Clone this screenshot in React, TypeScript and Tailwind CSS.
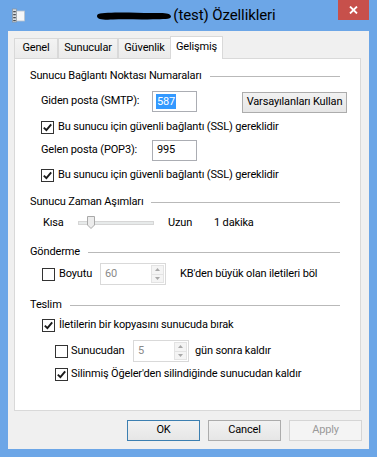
import React from "react";

const FONT = "font-['Roboto',sans-serif] text-[11px] tracking-[-0.15px] text-black";

function Check({ checked }: { checked?: boolean }) {
  return (
    <span className="w-[13px] h-[13px] border border-[#333333] bg-white flex items-center justify-center shrink-0">
      {checked && (
        <svg width="9" height="9" viewBox="0 0 9 9">
          <path d="M0.8 4.6 L3.4 7.2 L8.2 1.4" stroke="#1a1a1a" strokeWidth="1.9" fill="none" />
        </svg>
      )}
    </span>
  );
}

function Header({ text, mt }: { text: string; mt: string }) {
  return (
    <div className={`flex items-center h-[16px] pl-[15px] pr-[20px] ${mt}`}>
      <span className="whitespace-nowrap">{text}</span>
      <div className="flex-1 h-px bg-[#b9b9b9] ml-[8px]" />
    </div>
  );
}

function Spinner({ value, w }: { value: string; w: string }) {
  return (
    <div className={`flex h-[22px] ${w} border border-[#d9d9d9] bg-white`}>
      <div className="flex-1 flex items-center pl-[4px] text-[#8a8a8a]">{value}</div>
      <div className="w-[13px] flex flex-col my-[1px] mr-[1px] border border-[#e3e3e3] bg-[#f4f4f4]">
        <div className="flex-1 flex items-center justify-center border-b border-[#e3e3e3]">
          <svg width="5" height="3" viewBox="0 0 5 3"><path d="M0 3 L2.5 0 L5 3 Z" fill="#a8a8a8" /></svg>
        </div>
        <div className="flex-1 flex items-center justify-center">
          <svg width="5" height="3" viewBox="0 0 5 3"><path d="M0 0 L2.5 3 L5 0 Z" fill="#a8a8a8" /></svg>
        </div>
      </div>
    </div>
  );
}

function Btn({ children, variant }: { children: React.ReactNode; variant?: "default" | "disabled" }) {
  const cls =
    variant === "default"
      ? "border-[#3c7fb1] bg-gradient-to-b from-[#f2f2f2] to-[#e6e6e6] text-black"
      : variant === "disabled"
      ? "border-[#d5d5d5] bg-[#f4f4f4] text-[#9a9a9a]"
      : "border-[#acacac] bg-gradient-to-b from-[#f2f2f2] to-[#e6e6e6] text-black";
  return <div className={`w-[73px] h-[21px] border flex items-center justify-center ${cls}`}>{children}</div>;
}

export default function App() {
  return (
    <div className={`w-[377px] h-[457px] bg-[#6ca6e7] flex flex-col ${FONT}`}>
      {/* title bar */}
      <div className="h-[31px] flex items-start shrink-0">
        <div className="ml-[11px] mt-[8px] w-[14px] h-[15px]">
          <svg width="14" height="15" viewBox="0 0 14 15">
            <rect x="4" y="3" width="9.5" height="10" fill="#f4f6f8" stroke="#b8c2cc" strokeWidth="0.8" />
            <rect x="1.5" y="1" width="4" height="13" fill="#d8dde2" stroke="#8b939b" strokeWidth="0.7" />
            <rect x="2.2" y="3" width="2.6" height="1.3" fill="#4a4f55" />
            <rect x="2.2" y="6" width="2.6" height="1.3" fill="#4a4f55" />
            <rect x="2.2" y="9" width="2.6" height="1.3" fill="#4a4f55" />
            <rect x="2.2" y="12" width="2.6" height="1.1" fill="#4a4f55" />
          </svg>
        </div>
        <div className="flex-1 flex justify-center items-center h-[30px] pl-[8px]">
          <svg width="78" height="12" viewBox="0 0 78 12" className="mt-[1px]">
            <path d="M2 6 C2 2.5 10 3 20 2.5 C34 2 50 3.5 62 3 C70 2.6 76 3.5 76 6.5 C76 9.5 68 9 58 9.3 C44 9.8 30 9 18 9.6 C8 10 2 9.5 2 6 Z" fill="#000" />
          </svg>
          <span className="font-['Roboto',sans-serif] text-[15px] tracking-[-0.1px] text-black">(test) Özellikleri</span>
        </div>
        <div className="w-[31px] h-[20px] bg-[#c7504b] mr-[8px] flex items-center justify-center">
          <svg width="9" height="8" viewBox="0 0 9 8">
            <path d="M1 0.5 L8 7.5 M8 0.5 L1 7.5" stroke="#fff" strokeWidth="1.8" />
          </svg>
        </div>
      </div>

      {/* client */}
      <div className="mx-[8px] h-[418px] bg-[#f0f0f0] flex flex-col shrink-0">
        {/* tabs */}
        <div className="flex items-end h-[22px] mt-[5px] ml-[6px] relative z-10">
          <div className="w-[44px] h-[20px] border border-b-0 border-[#d9d9d9] bg-gradient-to-b from-[#f3f3f3] to-[#ebebeb] flex items-center justify-center">Genel</div>
          <div className="w-[60px] h-[20px] border border-b-0 border-[#d9d9d9] bg-gradient-to-b from-[#f3f3f3] to-[#ebebeb] flex items-center justify-center">Sunucular</div>
          <div className="w-[53px] h-[20px] border border-b-0 border-[#d9d9d9] bg-gradient-to-b from-[#f3f3f3] to-[#ebebeb] flex items-center justify-center">Güvenlik</div>
          <div className="w-[53px] h-[23px] -ml-[1px] -mb-px border border-b-0 border-[#d9d9d9] bg-white flex items-start justify-center pt-[2px]">Gelişmiş</div>
        </div>

        {/* panel */}
        <div className="ml-[6px] w-[347px] h-[353px] border border-[#d9d9d9] bg-white flex flex-col">
          <Header text="Sunucu Bağlantı Noktası Numaraları" mt="mt-[9px]" />

          <div className="flex items-center h-[22px] mt-[6px] pl-[26px]">
            <span className="w-[111px]">Giden posta (SMTP):</span>
            <div className="w-[45px] h-[21px] border border-[#abadb3] bg-white flex items-center pl-[3px]">
              <span className="bg-[#3399ff] text-white px-[1px] leading-[15px]">587</span>
            </div>
            <div className="ml-[45px] mt-[3px] w-[105px] h-[21px] border border-[#acacac] bg-gradient-to-b from-[#f2f2f2] to-[#e6e6e6] flex items-center justify-center">
              Varsayılanları Kullan
            </div>
          </div>

          <div className="flex items-center h-[16px] mt-[7px] pl-[26px]">
            <Check checked />
            <span className="ml-[4px]">Bu sunucu için güvenli bağlantı (SSL) gereklidir</span>
          </div>

          <div className="flex items-center h-[22px] mt-[4px] pl-[26px]">
            <span className="w-[111px]">Gelen posta (POP3):</span>
            <div className="w-[45px] h-[21px] border border-[#abadb3] bg-white flex items-center pl-[4px]">995</div>
          </div>

          <div className="flex items-center h-[16px] mt-[6px] pl-[26px]">
            <Check checked />
            <span className="ml-[4px]">Bu sunucu için güvenli bağlantı (SSL) gereklidir</span>
          </div>

          <Header text="Sunucu Zaman Aşımları" mt="mt-[11px]" />

          <div className="flex items-center h-[20px] mt-[3px] pl-[28px]">
            <span className="w-[35px]">Kısa</span>
            <div className="relative w-[76px] h-[20px] flex items-center">
              <div className="w-full h-[4px] bg-[#e7eaea] border border-[#d6d6d6]" />
              <svg className="absolute left-[9px] top-[3px]" width="8" height="13" viewBox="0 0 8 13">
                <path d="M0.5 0.5 H7.5 V9 L4 12.5 L0.5 9 Z" fill="#ececec" stroke="#a9a9a9" />
              </svg>
            </div>
            <span className="ml-[14px] w-[46px]">Uzun</span>
            <span>1 dakika</span>
          </div>

          <Header text="Gönderme" mt="mt-[11px]" />

          <div className="flex items-center h-[24px] mt-[2px] pl-[27px]">
            <Check />
            <span className="ml-[4px] w-[41px]">Boyutu</span>
            <Spinner value="60" w="w-[66px]" />
            <span className="ml-[14px]">KB'den büyük olan iletileri böl</span>
          </div>

          <Header text="Teslim" mt="mt-[11px]" />

          <div className="flex items-center h-[16px] mt-[4px] pl-[27px]">
            <Check checked />
            <span className="ml-[4px]">İletilerin bir kopyasını sunucuda bırak</span>
          </div>

          <div className="flex items-center h-[22px] mt-[7px] pl-[40px]">
            <Check />
            <span className="ml-[3px] w-[62px]">Sunucudan</span>
            <Spinner value="5" w="w-[56px]" />
            <span className="ml-[6px]">gün sonra kaldır</span>
          </div>

          <div className="flex items-center h-[16px] mt-[4px] pl-[40px]">
            <Check checked />
            <span className="ml-[3px]">Silinmiş Öğeler'den silindiğinde sunucudan kaldır</span>
          </div>
        </div>

        {/* buttons */}
        <div className="flex justify-end gap-[8px] mt-[9px] mr-[7px]">
          <Btn variant="default">OK</Btn>
          <Btn>Cancel</Btn>
          <Btn variant="disabled">Apply</Btn>
        </div>
      </div>
    </div>
  );
}
